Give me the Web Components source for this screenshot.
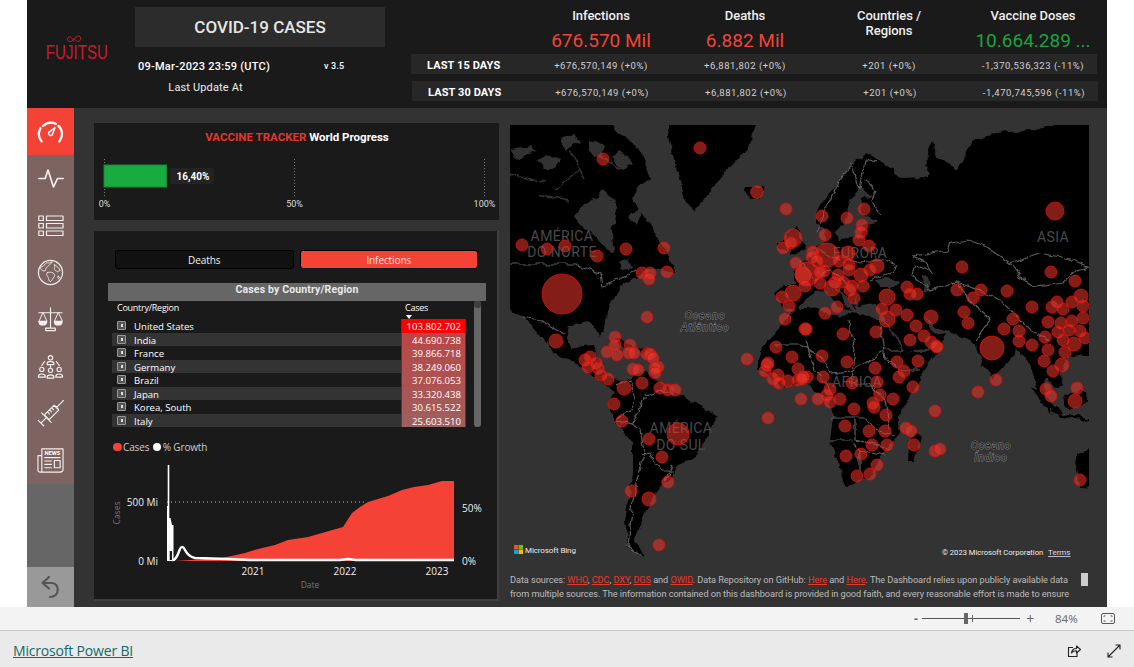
<!DOCTYPE html>
<html lang="en"><head><meta charset="utf-8"><title>COVID-19 Cases</title>
<style>
html,body{margin:0;padding:0;background:#fff;font-family:"Open Sans",sans-serif;}
body{width:1134px;height:667px;overflow:hidden;display:flex;flex-direction:column;}
</style></head>
<body>
<cov-report>
  <cov-header slot="header"></cov-header>
  <cov-nav slot="nav"></cov-nav>
  <cov-tracker slot="left"></cov-tracker>
  <cov-cases slot="left"></cov-cases>
  <cov-map slot="right"></cov-map>
  <cov-notes slot="right"></cov-notes>
</cov-report>
<pbi-toolbar></pbi-toolbar>
<pbi-footer></pbi-footer>
<script>
function def(name,html){
  customElements.define(name,class extends HTMLElement{
    constructor(){super();const r=this.attachShadow({mode:'open'});r.innerHTML=typeof html==='function'?html():html;}
  });
}
def('cov-report',`<style>
:host{display:block;margin-left:27px;width:1080px;height:607px;background:#333;flex:none}
.wrap{display:grid;grid-template-rows:108px 499px;grid-template-columns:47px 1fr;height:100%}
.h{grid-column:1/3}
.left{display:flex;flex-direction:column;gap:11px;padding:15px 0 0 20px;width:405px}
.right{display:flex;flex-direction:column;padding:17px 0 0 11px;width:597px}
.body{display:flex}
</style><div class="wrap"><div class="h"><slot name="header"></slot></div><slot name="nav"></slot>
<div class="body"><div class="left"><slot name="left"></slot></div><div class="right"><slot name="right"></slot></div></div></div>`);

def('cov-header',`<style>
:host{display:flex;height:108px;background:#1a1a1a;color:#fff;font-family:Roboto,sans-serif}
.logo{width:108px;display:flex;flex-direction:column;align-items:center;padding-top:35px;box-sizing:border-box}
.logo svg{display:block;margin-left:-15px}
.logo span{font:400 21px/20px "Liberation Sans",sans-serif;color:#cc1a2e;-webkit-text-stroke:.25px #cc1a2e;transform:scaleX(.72);margin:-3px 0 0 -8px;display:block}
.mid{width:276px;padding-top:7px;box-sizing:border-box}
.title{width:250px;height:40px;background:#2c2c2c;display:flex;align-items:center;justify-content:center;font:500 17px Roboto,sans-serif;color:#e6e6e6}
.dl{display:flex;width:250px;margin-top:12px;height:14px;align-items:center;font:500 11px Roboto,sans-serif;padding-left:3px;box-sizing:border-box;letter-spacing:.25px}
.dl b{font-weight:500;width:186px}
.dl i{font:500 9px Roboto,sans-serif;letter-spacing:.2px}
.lu{width:141px;text-align:center;margin-top:8px;font:400 11px Roboto,sans-serif;letter-spacing:.15px;color:#eee}
.stats{flex:1}
.top{display:grid;grid-template-columns:118px repeat(4,144px);height:54px}
.c{display:flex;flex-direction:column;align-items:center;padding-top:8px;font:500 13px/15px Roboto,sans-serif;color:#eee;text-align:center;box-sizing:border-box;letter-spacing:-.05px}
.c strong{font:400 19px/24px Roboto,sans-serif;margin-top:6px;letter-spacing:0;white-space:nowrap}
.red{color:#f44336}.grn{color:#1aa33f}
.row{display:grid;grid-template-columns:118px repeat(4,144px);width:686px;height:20px;padding-top:2px;box-sizing:border-box;background:#272727;align-items:center;font:400 9.5px Roboto,sans-serif;color:#d0d0d0;text-align:center;letter-spacing:.55px}
.row+.row{margin:7px 0 0 1px}
.row b{font:700 11px Roboto,sans-serif;color:#fff;text-align:left;padding-left:16px;letter-spacing:.1px}
</style>
<div class="logo"><svg width="16" height="10" viewBox="0 0 16 10"><path d="M8 6.5C6.5 3.5 5 1.5 3.3 1.8 1.2 2.2.9 5 2.5 6.2 4.3 7.5 6.6 6 8 4.5 9.4 2.6 10.8 .8 12.9 1c2 .3 2.5 3.2 1 4.6C12 7.400 9.500 6 8 3.500" fill="none" stroke="#cc1a2e" stroke-width="1"/></svg><span>FUJITSU</span></div>
<div class="mid"><div class="title">COVID-19 CASES</div><div class="dl"><b>09-Mar-2023 23:59 (UTC)</b><i>v 3.5</i></div><div class="lu">Last Update At</div></div>
<div class="stats">
<div class="top"><div></div><div class="c">Infections<strong class="red">676.570 Mil</strong></div><div class="c">Deaths<strong class="red">6.882 Mil</strong></div><div class="c">Countries /<br>Regions</div><div class="c">Vaccine Doses<strong class="grn">10.664.289 ...</strong></div></div>
<div class="row"><b>LAST 15 DAYS</b><span>+676,570,149 (+0%)</span><span>+6,881,802 (+0%)</span><span>+201 (+0%)</span><span>-1,370,536,323 (-11%)</span></div>
<div class="row"><b>LAST 30 DAYS</b><span>+676,570,149 (+0%)</span><span>+6,881,802 (+0%)</span><span>+201 (+0%)</span><span>-1,470,745,596 (-11%)</span></div>
</div>`);

const I='fill="none" stroke="#f4efee" stroke-width="1.2" stroke-linecap="round" stroke-linejoin="round"';
def('cov-nav',`<style>
:host{display:flex;flex-direction:column;width:47px;height:499px;background:#666}
.i{height:47px;flex:none;display:flex;align-items:center;justify-content:center;background:#7d6461}
.i.a{background:#f44336}
.i svg{display:block}
.sp{flex:1}
.b{height:40px;background:#999;display:flex;align-items:center;justify-content:center}
</style>
<div class="i a"><svg width="27" height="22" viewBox="0 0 26 22" fill="none" stroke="#fff" stroke-width="2.300" stroke-linecap="round" stroke-linejoin="round"><path d="M4.200 20.400A11.500 11.500 0 0 1 3 7.300"/><path d="M5.500 5A11.500 11.500 0 0 1 18.400 2.850"/><path d="M21.100 4.900A11.500 11.500 0 0 1 21.800 20.400"/><path d="M17.500 6.500 14.800 13.800a2.200 2.200 0 0 1-3.700-2.200Z" stroke-width="1.500"/></svg></div>
<div class="i"><svg width="26" height="20" viewBox="0 0 26 20" fill="none" stroke="#f4efee" stroke-width="1.700" stroke-linecap="round" stroke-linejoin="round"><path d="M.8 9.500H7.200L10 1 15.500 18 19.500 9.500H25.200"/></svg></div>
<div class="i"><svg width="26" height="22" viewBox="0 0 26 22" ${I}><rect x=".8" y="1" width="4.500" height="4.500"/><rect x=".8" y="8.500" width="4.500" height="4.500"/><rect x=".8" y="16" width="4.500" height="4.500"/><rect x="8.500" y="1" width="16.500" height="4.500"/><rect x="8.500" y="8.500" width="16.500" height="4.500"/><rect x="8.500" y="16" width="16.500" height="4.500"/></svg></div>
<div class="i"><svg width="27" height="27" viewBox="0 0 28 28" ${I} stroke-width="1"><circle cx="14" cy="14" r="12.500"/><path d="M3 9c3-1 5-3 7-5 2 1 4-1 6-1-1 2-3 2-4 4s-3 1-3 4-5 1-6-2zM11 14c3-1 6 0 7 2s-1 3-2 5-2 3-3 2-1-4-2-5-2-3 0-4zM18 6c2 1 5 3 6 6-2 0-2 2-3 1s-3-1-3-3 1-2 0-4zM22 18c1 0 2 1 1 2s-2 0-1-2z" stroke-width=".9"/></svg></div>
<div class="i"><svg width="27" height="27" viewBox="0 0 28 28" ${I}><path d="M14 2v20M2 7h24M9 25.500h10v-2.500H9z"/><path d="M6 7 2 16h8zM22 7l-4 9h8z" stroke-width="1"/><path d="M2 16c0 5 8 5 8 0zM18 16c0 5 8 5 8 0z" fill="#f4efee"/></svg></div>
<div class="i"><svg width="27" height="27" viewBox="0 0 28 28" ${I} stroke-width="1.100"><circle cx="14" cy="5" r="2.300"/><path d="M10.500 11c0-3 7-3 7 0v1h-7z"/><circle cx="5" cy="17" r="2.200"/><path d="M1.500 24c0-3 7-3 7 0v1h-7z"/><circle cx="14" cy="18" r="2.200"/><path d="M10.500 25c0-3 7-3 7 0v1h-7z"/><circle cx="23" cy="17" r="2.200"/><path d="M19.500 24c0-3 7-3 7 0v1h-7z"/><path d="M14 13v3M5 13c1-2 2-3 3-4M23 13c-1-2-2-3-3-4" stroke-dasharray="2 1"/></svg></div>
<div class="i"><svg width="27" height="27" viewBox="0 0 28 28" ${I} stroke-width="1.200"><g transform="rotate(45 14 14)"><path d="M14-5.500V5M11.500 5h5M10.500 5.500h7v14h-7zM7 20h14M14 20v8M10 28h8M10.500 9h3M10.500 12h3M10.500 15h3"/></g></svg></div>
<div class="i"><svg width="27" height="27" viewBox="0 0 28 28" ${I} stroke-width="1.100"><path d="M5 26V2h22v21c0 2-1 3-3 3H3c-1.500 0-2-1-2-2V9h4"/><text x="16" y="8.300" font-size="6" font-weight="700" text-anchor="middle" font-family="Roboto,sans-serif" fill="#fff" stroke="none">NEWS</text><path d="M8 11h16M8 14.500h7M8 18h7M8 21.500h7"/><rect x="18" y="14" width="6" height="7.500"/></svg></div>
<div class="sp"></div>
<div class="b"><svg width="22" height="24" viewBox="0 0 22 24" fill="none" stroke="#555" stroke-width="2.200" stroke-linecap="round" stroke-linejoin="round"><path d="M9 2 2.500 8 9 13.500"/><path d="M3 8h9c8 .5 8 14-2 14"/></svg></div>`);

def('cov-tracker',`<style>
:host{display:block;height:97px;background:#1a1a1a;width:405px;flex:none}
svg{display:block}
</style><svg width="405" height="97" viewBox="94 123 405 97" font-family="Roboto,sans-serif">
<text x="297" y="141" text-anchor="middle" font-size="11.500" font-weight="700" fill="#fff"><tspan fill="#e8352c">VACCINE TRACKER</tspan> World Progress</text>
<g stroke="#777" stroke-dasharray="1 2" stroke-width="1"><path d="M104.500 159v37M294.500 159v37M484.500 159v37"/></g>
<rect x="104" y="165" width="62.500" height="22" fill="#1aab40" stroke="#128a31" stroke-width="1"/>
<rect x="170" y="168" width="44" height="16" rx="2" fill="#232323"/>
<text x="176.500" y="180" font-size="10" font-weight="700" fill="#fff">16,40%</text>
<g font-size="9" fill="#ddd" text-anchor="middle"><text x="104.500" y="207">0%</text><text x="294.500" y="207">50%</text><text x="484.500" y="207">100%</text></g>
</svg>`);

const rows=[['United States','103.802.702','#ff0000'],['India','44.690.738','#b84747'],['France','39.866.718','#b44c4c'],['Germany','38.249.060','#b14e4e'],['Brazil','37.076.053','#ae5151'],['Japan','33.320.438','#a95656'],['Korea, South','30.615.522','#a65959'],['Italy','25.603.510','#a15e5e']];
def('cov-cases',()=>`<style>
:host{display:block;height:370px;width:405px;background:#1a1a1a;border-right:2px solid #3f3f3f;border-bottom:2px solid #3f3f3f;box-sizing:border-box;position:relative;font-family:"Open Sans",sans-serif;color:#fff}
.tg{display:flex;gap:6px;padding:19px 0 0 21px;height:19px}
.tg div{height:19px;width:178.500px;border-radius:3px;display:flex;align-items:center;justify-content:center;font-size:10px;background:#111;border:1px solid #000;box-sizing:border-box;color:#f2f2f2;letter-spacing:-.1px}
.tg div.on{background:#f44336;color:#ffe0dd}
.tt{margin:14px 0 0 14px;width:378px;height:18px;background:#666;text-align:center;font:700 10.500px/14px Roboto,sans-serif;color:#e8e8e8;letter-spacing:.15px}
.tb{position:relative;margin-left:14px;width:378px;height:126px}
.hd{display:flex;height:14px;font-size:9px;letter-spacing:-.25px;align-items:center;padding-left:9px;box-sizing:border-box;line-height:12px}
.hd span:first-child{width:288px}
.ar{display:block;width:0;height:0;border:3px solid transparent;border-top:4px solid #fff;border-bottom:0}
.r{display:flex;width:354px;height:13.500px;margin-left:4px;align-items:center;font-size:9.600px}
.r:nth-of-type(odd){background:#333}
.r .e{width:9px;height:9px;margin:0 8px 0 5px;border:1px solid #999;box-sizing:border-box;background:#555;position:relative;flex:none;border-radius:1px}
.r .e::after{content:"";position:absolute;left:2.500px;top:2px;width:2px;height:3px;background:#ddd}
.r .n{flex:1;padding-top:1.500px}
.r .v{width:65px;height:100%;text-align:right;padding-right:4px;box-sizing:border-box;line-height:15px;border-left:1px solid #7a2a2a;border-right:1px solid #7a2a2a;overflow:hidden}
.sb{position:absolute;left:366px;top:0;width:7px;height:126px;background:#666;border-radius:3px}
.sb::before{content:"";display:block;height:7px;background:#3d3d3d;border-radius:3px}
.lg{display:flex;align-items:center;padding:13px 0 0 19px;font-size:10px;color:#ccc;height:14px}
.lg i{display:block;width:8.500px;height:8.500px;border-radius:50%;margin-right:1.500px}
.lg span{margin-right:3.500px;letter-spacing:-.15px}
svg{display:block;position:absolute;left:0;top:0;pointer-events:none}
</style>
<div class="tg"><div>Deaths</div><div class="on">Infections</div></div>
<div class="tt">Cases by Country/Region</div>
<div class="tb"><div class="hd"><span>Country/Region</span><span>Cases</span></div><i class="ar" style="margin-left:298px"></i>
${rows.map(r=>`<div class="r"><i class="e"></i><span class="n">${r[0]}</span><span class="v" style="background:${r[2]}">${r[1]}</span></div>`).join('')}
<div class="sb"></div></div>
<div class="lg"><i style="background:#f44336"></i><span>Cases</span><i style="background:#fff"></i><span>% Growth</span></div>
<svg width="405" height="370" viewBox="94 231 405 370" font-family="'Open Sans',sans-serif" font-size="10">
<path d="M175 561 222 558 245 553 258 549 275 545 288 540 308 537 322 533 343 527 352 513 360 507 368 502 388 496 402 490 414 487 428 485 442 481 454 481V561Z" fill="#f44336"/>
<path d="M167 502H365" stroke="#bbb" stroke-dasharray="1 3" fill="none"/>
<path d="M167 561V506H167.700V465H169.300V518H170.500L172 525H173.500V561Z" fill="#fff"/>
<rect x="169.700" y="551" width="2.300" height="9" fill="#1a1a1a"/>
<path d="M172 560C176 561 178 554 180 549 181.500 546 183 546 185 550 187 554 190 557 195 558L228 559 250 560 340 560 348 559 356 560 454 560" stroke="#fff" stroke-width="2.400" fill="none"/>
<g fill="#eee" text-anchor="end"><text x="158" y="505.500">500 Mi</text><text x="158" y="565">0 Mi</text></g>
<g fill="#eee"><text x="462" y="511.500">50%</text><text x="462" y="565">0%</text></g>
<g fill="#eee" text-anchor="middle"><text x="253" y="575">2021</text><text x="345" y="575">2022</text><text x="437" y="575">2023</text></g>
<text x="310" y="588" fill="#777" font-size="8.500" text-anchor="middle">Date</text>
<text transform="translate(120 513) rotate(-90)" fill="#777" font-size="8.500" text-anchor="middle">Cases</text>
</svg>`);

const dots=[[700,148,6],[603,159,6],[757,192,6.3],[786,209,6],[793,238,9],[783,248,6],[791,243,6],[796,263,6],[522,245,6],[547,249,6],[565,246,6],[597,256,6],[626,249,6],[664,248,6],[642,273,6],[650,273,6],[649,279,6],[667,272,6],[562,294,20],[782,297,6],[793,293,8],[789,306,6],[647,317,6],[785,319,6],[803,275,8],[556,341,7],[615,337,6],[630,345,6],[776,347,6],[805,329,6],[607,352,6],[617,355,6],[615,345,6],[629,353,6],[634,353,6],[647,354,6],[650,354,6],[653,358,6],[658,367,6],[655,368,6],[655,373,6],[585,360,6],[590,357,6],[588,367,6],[596,363,6],[598,368,6],[601,375,6],[608,379,6],[633,369,6],[638,370,6],[642,383,6],[624,388,7],[660,388,6],[668,390,6],[675,390,6],[614,404,6],[622,421,6],[678,434,11],[649,439,6],[662,457,6],[668,482,6],[631,491,6],[649,499,7],[659,545,6],[747,359,6],[768,418,6],[801,399,6],[792,357,6],[767,365,6],[765,371,6],[768,363,6],[773,379,6],[778,375,6],[779,383,6],[788,381,6],[798,369,6],[798,380,6],[803,377,6],[822,216,6],[847,218,6],[864,209,6],[862,225,6],[861,232,6],[859,240,6],[825,235,6],[869,246,6],[827,255,12],[813,252,6],[812,257,6],[817,261,6],[848,253,7],[839,261,6],[849,264,6],[849,270,6],[877,266,7],[870,270,6],[861,275,7],[807,274,12],[824,271,6],[820,272,6],[838,275,6],[835,282,6],[843,282,6],[820,283,6],[805,286,6],[832,288,8],[852,286,6],[863,286,6],[850,290,6],[854,298,6],[907,287,6],[910,294,6],[917,294,6],[887,297,8],[882,309,6],[896,310,6],[887,319,8],[837,307,6],[825,313,6],[806,329,6],[843,334,6],[876,332,6],[910,340,6],[907,315,6],[931,317,7],[916,326,6],[924,336,6],[931,342,6],[936,346,6],[962,267,6],[957,290,6],[973,298,6],[981,290,6],[1007,291,6],[1051,272,6],[1055,211,9],[1075,281,6],[964,312,6],[968,323,6],[1013,319,6],[1004,329,6],[1019,331,6],[1019,341,6],[1032,307,6],[1048,322,6],[1045,337,6],[1032,345,6],[992,348,12],[1052,307,6],[1057,302,6],[1063,309,6],[1072,302,6],[1081,296,7],[1083,306,6],[1083,318,6],[1072,321,6],[1061,323,6],[1058,332,6],[1069,330,6],[1080,331,6],[1063,340,6],[1074,344,7],[1085,338,6],[1048,350,6],[822,356,6],[847,362,6],[875,368,6],[897,362,6],[904,371,6],[918,361,6],[899,377,6],[823,377,6],[807,377,6],[802,379,6],[852,383,6],[877,382,6],[913,387,6],[830,389,6],[827,395,6],[840,399,6],[830,402,6],[818,399,6],[880,395,6],[893,399,6],[873,403,6],[874,407,6],[854,409,6],[886,415,6],[845,426,6],[869,431,6],[885,431,6],[906,428,6],[911,431,6],[872,445,6],[887,445,6],[914,445,6],[935,411,6],[978,392,6],[996,380,6],[935,451,6],[940,449,6],[846,456,6],[861,454,6],[877,465,6],[870,474,6],[857,476,6],[1046,389,6],[1051,396,6],[1075,401,7],[1077,388,6],[1080,480,6],[1044,361,6],[1062,365,7],[1053,371,6],[1065,352,6],[937,347,6]];
const land=[
'M495 115 525 122 560 118 590 124 610 124 625 140 640 147 652 181 640 184 632 200 650 225 662 245 672 262 675 273 650 268 640 275 620 287 607 310 606 322 600 336 595 326 588 321 570 325 567 340 572 350 583 346 593 345 596 356 601 366 612 378 620 381 625 390 612 390 595 378 580 366 565 358 552 352 540 335 525 318 495 302Z',
'M615 385 625 380 645 373 665 385 682 397 718 415 705 440 695 457 675 467 672 477 652 497 642 520 635 540 645 557 628 547 625 520 633 473 633 443 612 417 608 403Z',
'M668 112 760 112 748 147 722 177 705 197 696 213 685 200 675 163 668 135Z',
'M744 187 765 187 762 198 748 199Z',
'M610 340 622 339 634 348 620 346ZM638 349 651 351 642 355Z',
'M786 234 797 227 805 248 790 255ZM777 243 786 240 785 251 777 250Z',
'M795 270 812 255 823 243 826 232 815 222 815 210 833 190 850 167 867 153 893 170 900 178 927 177 928 153 933 140 937 157 957 170 973 140 997 133 1033 130 1100 112 1105 357 1070 355 1060 372 1065 385 1055 388 1045 377 1043 395 1052 415 1040 402 1035 380 1030 365 1018 350 1005 365 992 378 983 365 977 348 968 340 950 332 937 327 925 318 935 335 946 333 941 345 908 352 885 322 882 313 876 304 860 306 855 297 856 310 848 298 835 288 852 311 840 308 826 291 815 292 805 298 798 310 782 308 775 292 785 285 795 285Z',
'M795 310 775 333 762 347 758 370 782 387 805 383 830 400 833 417 830 440 840 470 847 487 870 477 883 453 900 433 897 417 910 397 923 373 943 343 926 352 908 352 886 324 870 315 848 313 840 318 822 311 808 308Z',
'M917 432 922 437 915 462 907 460 908 445Z',
'M1031 387 1040 392 1062 412 1056 414 1040 402ZM1057 413 1100 420 1100 423 1060 417ZM1063 395 1083 390 1088 402 1070 410 1065 408ZM1077 453 1100 448 1100 488 1079 487 1076 470Z'
];
const sea=[
'M575 215 585 203 598 198 602 190 615 203 615 217 612 230 613 253 602 243 592 233 580 227Z',
'M860 188 850 200 845 222 835 232 838 240 860 238 862 225 878 222 868 215 860 212 862 200 872 195Z',
'M875 280 888 277 900 283 895 288 880 288Z','M922 277 927 276 929 290 924 291Z',
'M535 160 548 155 560 160 555 168 545 168ZM620 150 632 165 622 170 612 158ZM512 150 530 146 535 152 515 160ZM560 138 575 133 580 142 565 150ZM590 140 605 145 600 158 590 152Z',
'M640 205 644 208 636 225 630 218ZM620 262 628 258 632 268 622 270Z'
];
const borders=[
'M500 264H575L600 273 602 287 618 280 635 270','M522 317 541 320 565 334',
'M817 230 842 175 852 165 860 190 865 160 877 163','M866 180 875 190 870 200 880 215',
'M913 256 920 255 947 250 950 243 967 240 983 245 1010 263 1027 257 1040 253 1060 257 1087 267','M1010 263 1020 277 1037 287 1063 283 1077 270 1089 267',
'M913 256 925 262 932 272 915 265 912 275 930 290 955 282 980 290 1000 300 1030 330 1050 340','M955 282 970 300 990 320 975 340',
'M842 255 860 262 880 260 898 265 895 270 870 280','M800 260 815 280 830 270 850 285','M820 250 840 262',
'M775 345 800 345 822 358 830 372 850 370 870 360 885 350 905 350','M805 340 815 370 830 390','M848 320 855 350 850 385 870 385 885 400 890 430','M880 325 885 360 900 370 920 370','M830 418 865 418 875 430 895 435','M830 440 850 440 860 450 860 470','M855 420 855 440 880 445 890 450','M860 450 885 455',
'M615 385 630 380 635 400 632 410 615 420 632 425 640 410 645 395 660 390 675 395','M632 425 640 430 645 455 640 470 633 500 628 545 640 556','M640 455 650 452 660 470 672 470 662 485 672 465'
];
def('cov-map',()=>`<style>
:host{display:block;width:579px;height:440px;flex:none}
svg{display:block}
text{font-family:Roboto,sans-serif}
.cont{font-size:14px;fill:#4a4a4a;letter-spacing:.4px}
.oc{font-size:11px;font-style:italic;fill:#1e1e1e;stroke:#8a8a8a;stroke-width:.8px;letter-spacing:.7px;paint-order:stroke}
</style><svg width="579" height="440" viewBox="510 125 579 440">
<defs><filter id="rough" filterUnits="userSpaceOnUse" x="470" y="90" width="660" height="520"><feTurbulence type="fractalNoise" baseFrequency=".09" numOctaves="3" seed="4" result="n"/><feDisplacementMap in="SourceGraphic" in2="n" scale="7" xChannelSelector="R" yChannelSelector="G"/><feGaussianBlur stdDeviation=".35"/></filter></defs>
<rect x="510" y="125" width="579" height="440" fill="#333"/>
<g filter="url(#rough)"><g fill="#000">${land.map(d=>`<path d="${d}"/>`).join('')}</g>
<g fill="#333">${sea.map(d=>`<path d="${d}"/>`).join('')}</g>
<path d="M872 246 877 262M885 322 905 350M622 170 590 150M555 190 580 170M540 195 570 200M510 175 545 182M570 150 585 178" stroke="#333" stroke-width="1.500" fill="none"/></g>
<g fill="none" stroke="#5e5e5e" stroke-width="1.200" filter="url(#rough)">${borders.map(d=>`<path d="${d}"/>`).join('')}</g>
<g class="cont" text-anchor="middle"><text x="562" y="241">AMÉRICA</text><text x="562" y="257">DO NORTE</text><text x="860" y="258">EUROPA</text><text x="1053" y="242">ASIA</text><text x="857" y="387">ÁFRICA</text><text x="681" y="433">AMÉRICA</text><text x="681" y="450">DO SUL</text></g>
<g class="oc" text-anchor="middle"><text x="705" y="319">Oceano</text><text x="705" y="331">Atlântico</text><text x="991" y="449">Oceano</text><text x="991" y="461">Índico</text></g>
<g fill="rgba(236,52,44,.55)" stroke="rgba(214,16,12,.85)" stroke-width="1">${dots.map(d=>`<circle cx="${d[0]}" cy="${d[1]}" r="${d[2]}"/>`).join('')}</g>
<rect x="514" y="545" width="4.300" height="4.300" fill="#f25022"/><rect x="518.700" y="545" width="4.300" height="4.300" fill="#7fba00"/><rect x="514" y="549.700" width="4.300" height="4.300" fill="#00a4ef"/><rect x="518.700" y="549.700" width="4.300" height="4.300" fill="#ffb900"/>
<text x="525" y="553" font-size="8" fill="#e8e8e8" letter-spacing="-.1">Microsoft Bing</text>
<text x="942" y="555" font-size="7.600" fill="#eee">© 2023 Microsoft Corporation</text>
<text x="1048" y="555" font-size="8" fill="#dde" text-decoration="underline">Terms</text>
</svg>`);

def('cov-notes',`<style>
:host{display:block;position:relative;width:590px;height:29px;margin-top:8px;overflow:hidden;font:9.200px/13.500px Roboto,sans-serif;color:#bbb;letter-spacing:-.07px}
a{color:#e8392f;text-decoration:underline}
p{margin:0;width:566px;white-space:nowrap}
.t{position:absolute;left:571px;top:-1px;width:7px;height:14px;background:#ccc}
</style><p>Data sources: <a>WHO</a>, <a>CDC</a>, <a>DXY</a>, <a>DGS</a> and <a>OWID</a>. Data Repository on GitHub: <a>Here</a> and <a>Here</a>. The Dashboard relies upon publicly available data</p><p>from multiple sources. The information contained on this dashboard is provided in good faith, and every reasonable effort is made to ensure</p><div class="t"></div>`);

def('pbi-toolbar',`<style>
:host{display:flex;flex:none;height:23px;background:#f3f3f3;border-bottom:1.500px solid #c9c9c9;align-items:center;font:400 12px "Open Sans",sans-serif;color:#666}
.sl{margin-left:910px;display:flex;align-items:center;width:130px;height:100%}
.m{width:12px;text-align:center;font-weight:700;line-height:12px}
.tr{position:relative;width:100px;height:1px;background:#555}
.tr b{position:absolute;left:42px;top:-5px;width:4px;height:11px;background:#666}
.tr i{position:absolute;left:50px;top:-3px;width:1px;height:7px;background:#666}
.p{width:20px;text-align:center;font-size:14px}
.z{margin-left:15px;width:24px;font-size:11.500px}
svg{display:block;margin-left:22px}
</style><div class="sl"><span class="m">-</span><div class="tr"><b></b><i></i></div><span class="p">+</span></div><span class="z">84%</span><svg width="14" height="11" viewBox="0 0 14 11" fill="none" stroke="#555"><rect x=".5" y=".5" width="13" height="10" rx="1.500"/><path d="M3 4V2.800h1.500M11 4V2.800H9.500M3 7v1.200h1.500M11 7v1.200H9.500" stroke-width=".8"/></svg>`);

def('pbi-footer',`<style>
:host{display:flex;flex:1;background:#eaeaea;align-items:center;padding:3px 0 0 13px;font:400 14px "Open Sans",sans-serif}
a{color:#0f6a6e;text-decoration:underline;letter-spacing:-.18px;flex:1}
svg{display:block;margin-right:26px}
.last{margin-right:13px}
</style><a>Microsoft Power BI</a>
<svg width="14" height="14" viewBox="0 0 14 14" fill="none" stroke="#222" stroke-width="1.100" stroke-linejoin="round"><path d="M10 8v4.500H1.500V3.500H6"/><path d="M4.500 9c.3-3 2.500-4.500 5-4.500V2l4 3.500-4 3.500V6.800c-2 0-4 .5-5 2.200z"/></svg>
<svg class="last" width="14" height="14" viewBox="0 0 14 14" fill="none" stroke="#222" stroke-width="1.100"><path d="M1 13 13 1M8.500 1H13v4.500M1 8.500V13h4.500"/></svg>`);
</script>
</body></html>
